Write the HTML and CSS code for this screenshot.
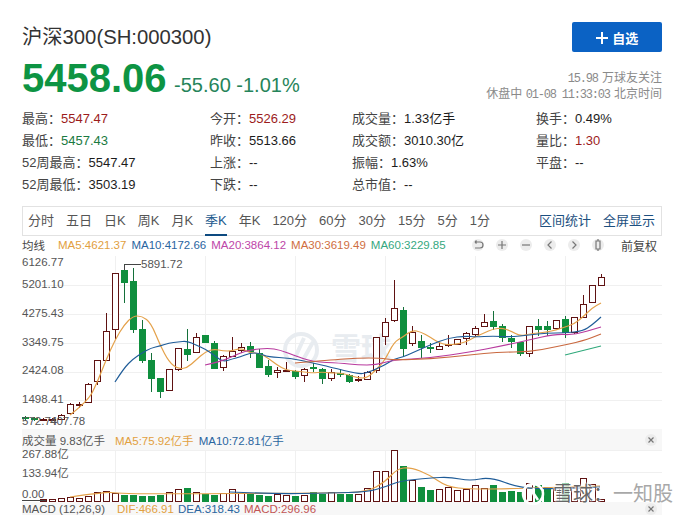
FILE: index.html
```html
<!DOCTYPE html>
<html lang="zh-CN">
<head>
  <meta charset="UTF-8">
  <title>沪深300(SH:000300)</title>
  <link rel="stylesheet" href="styles.css">
</head>
<body>
  <div class="page">
    <!-- Title row -->
    <div class="title-row">
      <h1>沪深300(SH:000300)</h1>
      <button class="follow">
        <svg width="12" height="12" viewBox="0 0 12 12"><path d="M6 0v12M0 6h12" stroke="#fff" stroke-width="2"/></svg>
        自选
      </button>
    </div>

    <div class="quote-row">
      <div class="quote">
        <span class="price">5458.06</span>
        <span class="change">-55.60 -1.01%</span>
      </div>
      <div class="meta">
        <div><span class="mono">15.98</span> 万球友关注</div>
        <div>休盘中 <span class="mono">01-08 11:33:03</span> 北京时间</div>
      </div>
    </div>

    <!-- Stats -->
    <div class="stats">
      <div>最高：<b class="red">5547.47</b></div>
      <div>今开：<b class="red">5526.29</b></div>
      <div>成交量：<b>1.33亿手</b></div>
      <div>换手：<b>0.49%</b></div>
      <div>最低：<b class="green">5457.43</b></div>
      <div>昨收：<b>5513.66</b></div>
      <div>成交额：<b>3010.30亿</b></div>
      <div>量比：<b class="red">1.30</b></div>
      <div>52周最高：<b>5547.47</b></div>
      <div>上涨：<b>--</b></div>
      <div>振幅：<b>1.63%</b></div>
      <div>平盘：<b>--</b></div>
      <div>52周最低：<b>3503.19</b></div>
      <div>下跌：<b>--</b></div>
      <div>总市值：<b>--</b></div>
    </div>

    <!-- Tabs -->
    <nav class="tabs">
      <a>分时</a><a>五日</a><a>日K</a><a>周K</a><a>月K</a><a class="active">季K</a><a>年K</a>
      <a>120分</a><a>60分</a><a>30分</a><a>15分</a><a>5分</a><a>1分</a>
      <span class="tab-links"><a>区间统计</a><a>全屏显示</a></span>
    </nav>

    <!-- MA legend -->
    <div class="legend">
      <span class="legend-name">均线</span>
      <span class="c-ma5">MA5:4621.37</span>
      <span class="c-ma10">MA10:4172.66</span>
      <span class="c-ma20">MA20:3864.12</span>
      <span class="c-ma30">MA30:3619.49</span>
      <span class="c-ma60">MA60:3229.85</span>
      <div class="tools">
        <i><svg viewBox="0 0 12 12"><path d="M3 3h5a2.5 2.5 0 0 1 0 6H3M3 3l1.500-1.500M3 3l1.500 1.500"/></svg></i>
        <i><svg viewBox="0 0 12 12"><path d="M2 6h8M6 2v8"/></svg></i>
        <i><svg viewBox="0 0 12 12"><path d="M2 6h8"/></svg></i>
        <i><svg viewBox="0 0 12 12"><path d="M7.500 2.500 4 6l3.500 3.500"/></svg></i>
        <i><svg viewBox="0 0 12 12"><path d="M4.500 2.500 8 6l-3.500 3.500"/></svg></i>
        <i><svg viewBox="0 0 12 12"><path d="M6 0v2M6 10v2M4 2h4v8H4z"/></svg></i>
        <span class="adjust">前复权</span>
      </div>
    </div>

    <!-- Candles, drawn by chart.js -->
    <svg id="kline" class="plot" width="640" height="173" viewBox="22 256 640 173">
      <g id="klineGrid"></g>
      <g class="mark">
        <circle cx="301" cy="350" r="16"/>
        <path d="M294 360 304 338M303 360 313 342"/>
      </g>
      <text class="mark-text" x="331" y="359">雪球</text>
      <g id="klineBody"></g>
      <path class="leader" d="M124.500 270V264.500H141"/>
      <text class="axis" x="141" y="268">5891.72</text>
      <text class="axis" x="22" y="266">6126.77</text>
      <text class="axis" x="22" y="288">5201.10</text>
      <text class="axis" x="22" y="317">4275.43</text>
      <text class="axis" x="22" y="346">3349.75</text>
      <text class="axis" x="22" y="374">2424.08</text>
      <text class="axis" x="22" y="403">1498.41</text>
      <text class="axis" x="22" y="425">572.74</text>
      <text class="axis" x="50" y="425">407.78</text>
    </svg>

    <div class="sub-head">
      <span>成交量 9.83亿手</span>
      <span class="c-ma5">MA5:75.92亿手</span>
      <span class="c-ma10">MA10:72.81亿手</span>
      <i class="close"><svg viewBox="0 0 12 12"><path d="M3.500 3.500l5 5M8.500 3.500l-5 5"/></svg></i>
    </div>

    <svg id="volume" class="plot" width="640" height="52" viewBox="22 450 640 52">
      <g id="volumeGrid"></g>
      <g id="volumeBody"></g>
      <text class="axis" x="22" y="458">267.88亿</text>
      <text class="axis" x="22" y="477">133.94亿</text>
      <text class="axis" x="22" y="498">0.00</text>
    </svg>

    <div class="sub-head macd">
      <span class="macd-name">MACD (12,26,9)</span>
      <span class="c-ma5">DIF:466.91</span>
      <span class="c-ma10">DEA:318.43</span>
      <span class="c-macd">MACD:296.96</span>
      <i class="close"><svg viewBox="0 0 12 12"><path d="M3.500 3.500l5 5M8.500 3.500l-5 5"/></svg></i>
    </div>

    <!-- Repost watermark -->
    <div class="stamp">
      <svg width="24" height="24" viewBox="0 0 24 24"><circle cx="12" cy="12" r="10"/><path d="M8 18 13 6M13 12l4 6"/></svg>
      <span class="stamp-dark">雪球：</span><span>一知股</span>
    </div>
  </div>

  <script src="chart.js"></script>
</body>
</html>
```

FILE: styles.css
```css
html, body {
  margin: 0;
  padding: 0;
  height: 515px;
  overflow: hidden;
  background: #fff;
}

body {
  color: #333;
  font-family: "Liberation Sans", "Noto Sans CJK SC", sans-serif;
}

.page {
  position: relative;
  width: 640px;
  height: 515px;
  padding-left: 22px;
}

.title-row {
  display: flex;
  justify-content: space-between;
  align-items: center;
  height: 30px;
  padding-top: 22px;
}

h1 {
  margin: 0 0 4px;
  font-size: 20.3px;
  font-weight: normal;
  color: #333;
}

.follow {
  width: 90px;
  height: 30px;
  border: 0;
  border-radius: 2px;
  background: #0b62c4;
  color: #fff;
  font-family: inherit;
  font-size: 13px;
  font-weight: bold;
}

.follow svg {
  vertical-align: -1px;
  margin-right: 1px;
}

.quote-row {
  display: flex;
  justify-content: space-between;
  align-items: flex-end;
  height: 46px;
  padding-top: 2px;
}

.price {
  font-size: 40px;
  font-weight: bold;
  color: #0d9443;
  line-height: 44px;
}

.change {
  font-size: 20px;
  color: #26845a;
  margin-left: 3px;
}

.meta {
  text-align: right;
  font-size: 12px;
  color: #8a8a8a;
  margin-bottom: -2px;
}

.meta div {
  height: 16px;
  line-height: 16px;
}

.mono {
  font-family: "Liberation Mono", monospace;
  font-size: 12px;
  letter-spacing: -1.2px;
  margin-right: 1px;
}

.stats {
  display: grid;
  grid-template-columns: 188px 142px 184px 1fr;
  grid-auto-rows: 22px;
  margin-top: 8px;
  font-size: 13px;
  line-height: 22px;
  color: #444;
}

.stats b {
  font-weight: normal;
  color: #1c1c1c;
}

.stats .red { color: #9c1c1c; }
.stats .green { color: #1a7a42; }

.tabs {
  display: flex;
  align-items: center;
  gap: 12px;
  box-sizing: border-box;
  height: 30px;
  margin-top: 10px;
  padding-left: 5px;
  border: 1px solid #e2e2e2;
  font-size: 13px;
  color: #555;
}

.tabs a {
  line-height: 26px;
  border-bottom: 2px solid transparent;
  margin-top: 2px;
}

.tabs .active {
  color: #1c5a8e;
  border-bottom-color: #0d4a80;
}

.tab-links {
  display: flex;
  gap: 12px;
  margin-left: auto;
  margin-right: 6px;
  color: #1c4f80;
}

.legend {
  display: flex;
  align-items: center;
  gap: 5px;
  box-sizing: border-box;
  height: 20px;
  padding-bottom: 2px;
  font-size: 11.5px;
}

.legend-name {
  width: 31px;
  color: #444;
}

.c-ma5 { color: #e2a040; }
.c-ma10 { color: #2a659f; }
.c-ma20 { color: #bd46a8; }
.c-ma30 { color: #cf6e3e; }
.c-ma60 { color: #35a880; }
.c-macd { color: #c25555; }

.tools {
  display: flex;
  align-items: center;
  gap: 12px;
  margin-left: auto;
  margin-right: 5px;
}

.tools i, .close {
  display: block;
  width: 12px;
  height: 12px;
  border-radius: 50%;
  background: #ececec;
}

.tools svg, .close svg {
  display: block;
  width: 12px;
  height: 12px;
  fill: none;
  stroke: #777;
  stroke-width: 1.2;
}

.adjust {
  margin-left: 5px;
  font-size: 12px;
  color: #444;
}

.plot {
  display: block;
  overflow: visible;
}

.grid-line {
  stroke: #f0f0f0;
  stroke-width: 1;
}

.mark circle, .mark path {
  fill: none;
  stroke: #e8ecf0;
  stroke-width: 4;
}

.mark-text {
  font-size: 30px;
  font-weight: bold;
  fill: #e8ecf0;
}

.axis {
  font-size: 11.5px;
  fill: #555;
}

.leader {
  fill: none;
  stroke: #444;
  stroke-width: 1;
}

.up { fill: #fff; stroke: #5f1212; stroke-width: 1; }
.down { fill: #0f8f3e; }
.wick-up { stroke: #5f1212; stroke-width: 1; }
.wick-down { stroke: #14703a; stroke-width: 1; }

.ma { fill: none; stroke-width: 1.2; stroke-linejoin: round; }
.ma5 { stroke: #e4a14a; }
.ma10 { stroke: #1f5c98; }
.ma20 { stroke: #b83a9e; }
.ma30 { stroke: #c9683f; }
.ma60 { stroke: #2ea87a; }

.sub-head {
  display: flex;
  align-items: center;
  gap: 5px;
  height: 21px;
  background: #f7f7f7;
  font-size: 11.5px;
  color: #555;
}

.sub-head span:first-child {
  width: 88px;
  white-space: nowrap;
}

.sub-head .close {
  margin-left: auto;
  margin-right: 5px;
}

.macd {
  height: 13px;
  align-items: flex-start;
  line-height: 14px;
  gap: 4px;
  overflow: hidden;
}

.macd-name {
  margin-right: 3px;
}

.macd .close {
  margin-top: 1px;
}

.stamp {
  position: absolute;
  left: 521px;
  top: 482px;
  display: flex;
  align-items: center;
  white-space: nowrap;
  font-size: 20px;
  line-height: 24px;
  color: #a8a8a8;
  text-shadow: 0 0 2px #fff, 0 0 2px #fff, 0 0 3px #fff;
}

.stamp svg {
  margin-right: 8px;
  fill: none;
  stroke: #fff;
  stroke-width: 2.5;
}

.stamp-dark {
  color: #666;
}
```

FILE: chart.js
```js
const NS = "http://www.w3.org/2000/svg";

// x of the first bar and distance between bars
const X0 = 25, STEP = 9;

// [high, top, bottom, low, up?]  one row per quarter, page pixels
const candles = [
  [416, 417, 418, 420, 0], [417, 418, 419, 421, 0], [418, 419, 420, 421, 1], [418, 419, 420, 421, 1],
  [414, 415, 419, 420, 1], [403, 404, 413, 414, 1], [402, 404, 405, 408, 1], [383, 384, 402, 403, 1],
  [360, 360, 381, 385, 1], [313, 331, 360, 361, 1], [273, 273, 329, 339, 1], [264, 270, 282, 303, 0],
  [268, 281, 329, 333, 0], [320, 329, 360, 363, 0], [353, 360, 378, 392, 0], [378, 378, 391, 398, 0],
  [369, 369, 390, 391, 1], [348, 348, 369, 371, 1], [329, 349, 354, 361, 0], [333, 337, 352, 353, 1],
  [335, 335, 342, 343, 0], [341, 343, 368, 369, 0], [355, 356, 367, 371, 1], [337, 351, 356, 357, 1],
  [343, 347, 350, 353, 1], [342, 346, 351, 358, 0], [349, 353, 367, 368, 0], [360, 366, 374, 377, 0],
  [367, 370, 372, 378, 1], [362, 370, 371, 372, 1], [370, 371, 376, 379, 0], [368, 369, 375, 382, 1],
  [363, 367, 368, 372, 0], [368, 369, 378, 384, 0], [369, 372, 378, 381, 1], [369, 373, 374, 377, 0],
  [374, 375, 381, 383, 0], [376, 379, 380, 382, 1], [371, 372, 379, 380, 1], [337, 337, 370, 373, 1],
  [318, 322, 336, 345, 1], [280, 308, 320, 322, 1], [307, 310, 348, 356, 0], [326, 332, 343, 346, 1],
  [335, 341, 347, 358, 0], [343, 347, 348, 353, 0], [342, 346, 349, 350, 1], [335, 344, 345, 347, 1],
  [339, 339, 344, 345, 1], [332, 333, 338, 345, 1], [326, 328, 334, 337, 1], [314, 322, 326, 327, 1],
  [311, 321, 326, 330, 0], [324, 326, 337, 342, 0], [335, 338, 341, 348, 0], [342, 342, 353, 356, 0],
  [326, 326, 353, 357, 1], [319, 326, 329, 336, 0], [321, 326, 329, 336, 0], [320, 320, 328, 329, 1],
  [316, 319, 332, 338, 0], [317, 317, 332, 334, 1], [295, 304, 317, 318, 1], [285, 285, 302, 303, 1],
  [274, 277, 285, 286, 1]
];

// [x, top] of volume bars
const volumes = [
  [43, 499, 1], [52, 499, 1], [61, 498, 1], [70, 497, 1], [79, 498, 1], [88, 496, 1], [97, 492, 1], [106, 491, 1],
  [115, 493, 1], [124, 495, 0], [133, 495, 0], [142, 496, 0], [151, 496, 0], [160, 495, 0], [169, 492, 1], [178, 489, 1],
  [187, 488, 0], [196, 492, 1], [205, 494, 0], [214, 495, 0], [223, 493, 1], [232, 489, 1], [241, 493, 1], [250, 494, 0],
  [259, 495, 0], [268, 496, 0], [277, 494, 1], [286, 495, 1], [295, 496, 0], [304, 495, 1], [313, 492, 0], [322, 494, 0],
  [331, 492, 1], [340, 494, 0], [349, 494, 0], [358, 494, 1], [367, 488, 1], [376, 471, 1], [385, 471, 1], [394, 450, 1],
  [403, 466, 0], [412, 480, 1], [421, 487, 0], [430, 490, 0], [439, 489, 1], [448, 487, 1], [457, 490, 1], [466, 489, 1],
  [475, 485, 1], [484, 488, 1], [493, 485, 0], [502, 492, 0], [511, 491, 0], [520, 492, 0], [529, 483, 1], [538, 485, 0],
  [547, 487, 0], [556, 488, 1], [565, 483, 0], [574, 487, 1], [583, 478, 1], [592, 484, 1], [601, 499, 1]
];

const maLines = {
  ma5: [[70,415],[88,401],[97,383],[106,360],[115,340],[124,325],[133,316],[142,316],[151,323],[160,345],[169,362],[178,369],[187,368],[196,360],[205,352],[214,349],[223,351],[232,351],[241,348],[250,353],[259,353],[268,358],[277,365],[286,370],[295,371],[304,372],[313,373],[322,372],[331,373],[340,373],[349,375],[358,378],[367,378],[376,370],[385,360],[394,342],[403,337],[412,330],[421,332],[430,337],[439,343],[448,345],[457,344],[466,342],[475,337],[484,333],[493,329],[502,328],[511,331],[520,336],[529,334],[538,333],[547,332],[556,330],[565,327],[574,324],[583,317],[592,308],[601,303]],
  ma10: [[115,382],[124,368],[133,359],[142,353],[151,348],[160,346],[169,343],[178,342],[187,341],[196,345],[205,349],[214,355],[223,362],[232,359],[240,357],[250,353],[259,353],[268,357],[290,358],[313,363],[330,367],[358,374],[367,373],[385,365],[394,359],[403,357],[412,353],[430,345],[448,338],[466,336],[475,337],[493,336],[511,337],[529,335],[547,333],[565,333],[583,331],[592,325],[601,317]],
  ma20: [[205,365],[220,362],[240,353],[250,350],[268,348],[280,350],[293,355],[313,362],[340,363],[358,365],[376,365],[393,360],[430,358],[470,352],[502,346],[529,340],[555,334],[574,335],[601,327]],
  ma30: [[295,363],[330,360],[358,358],[380,358],[393,360],[430,359],[470,355],[498,352],[529,352],[555,347],[583,341],[601,334]],
  ma60: [[565,355],[601,346]]
};

const volLines = {
  ma5: [[70,497],[106,492],[115,493],[143,494],[330,493],[367,492],[385,482],[397,469],[410,467],[430,475],[447,487],[470,489],[500,489],[600,486]],
  ma10: [[230,492],[273,494],[330,493],[367,492],[385,487],[400,481],[430,478],[450,477],[470,481],[490,477],[520,488],[555,489],[600,487]]
};

function add(parent, tag, attrs) {
  const el = document.createElementNS(NS, tag);
  for (const k in attrs) el.setAttribute(k, attrs[k]);
  parent.appendChild(el);
  return el;
}

function drawGrid(parent, ys, top, bottom) {
  ys.forEach(y => add(parent, "line", { class: "grid-line", x1: 22, x2: 662, y1: y + 0.5, y2: y + 0.5 }));
  [115, 205, 295, 385, 475, 565].forEach(x => add(parent, "line", { class: "grid-line", x1: x + 0.5, x2: x + 0.5, y1: top, y2: bottom }));
}

function drawBox(parent, x, top, bottom, up) {
  if (up) add(parent, "rect", { class: "up", x: x - 2.5, y: top + 0.5, width: 6, height: Math.max(bottom - top, 1) });
  else add(parent, "rect", { class: "down", x: x - 3, y: top, width: 7, height: Math.max(bottom - top + 1, 2) });
}

// midpoint smoothing, the MA points are read off by eye
function drawLine(parent, pts, name) {
  let d = `M${pts[0][0]} ${pts[0][1]}`;
  for (let i = 1; i < pts.length - 1; i++) {
    const mx = (pts[i][0] + pts[i + 1][0]) / 2;
    const my = (pts[i][1] + pts[i + 1][1]) / 2;
    d += `Q${pts[i][0]} ${pts[i][1]} ${mx} ${my}`;
  }
  const last = pts[pts.length - 1];
  d += `L${last[0]} ${last[1]}`;
  add(parent, "path", { class: `ma ${name}`, d: d });
}

const klineBody = document.getElementById("klineBody");
const volumeBody = document.getElementById("volumeBody");

drawGrid(document.getElementById("klineGrid"), [285, 314, 343, 372, 400], 256, 429);
drawGrid(document.getElementById("volumeGrid"), [450, 472], 450, 502);

candles.forEach((c, i) => {
  const x = X0 + STEP * i;
  add(klineBody, "line", { class: c[4] ? "wick-up" : "wick-down", x1: x + 0.5, x2: x + 0.5, y1: c[0], y2: c[3] });
  drawBox(klineBody, x, c[1], c[2], c[4]);
});

for (const name in maLines) drawLine(klineBody, maLines[name], name);

volumes.forEach(v => drawBox(volumeBody, v[0], v[1], 501, v[2]));
for (const name in volLines) drawLine(volumeBody, volLines[name], name);
add(volumeBody, "line", { class: "leader", x1: 22, x2: 46, y1: 500.5, y2: 500.5 });
```
